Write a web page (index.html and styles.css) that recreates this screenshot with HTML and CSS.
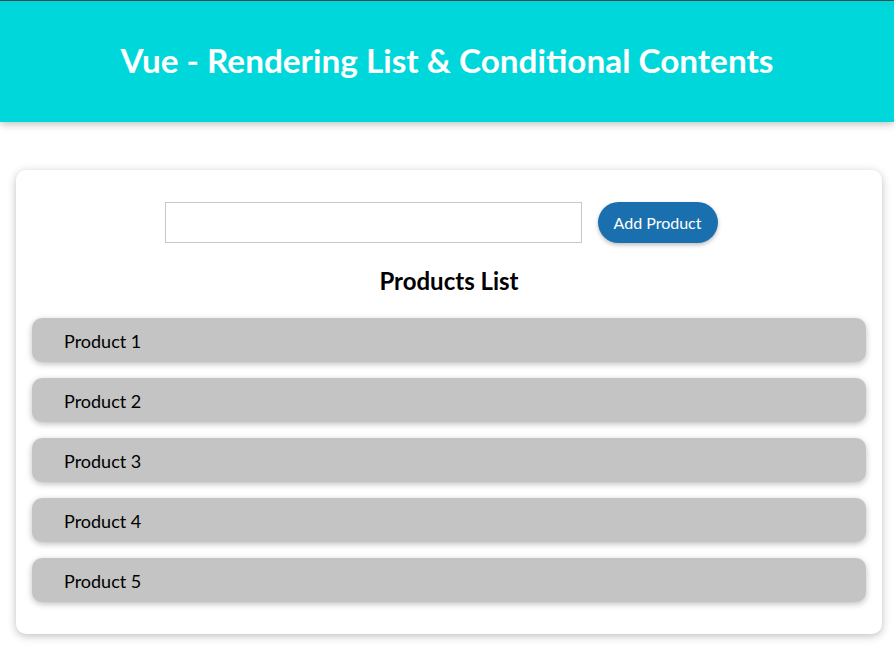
FILE: index.html
```html
<!DOCTYPE html>
<html lang="en">
<head>
<meta charset="utf-8">
<title>Vue - Rendering List &amp; Conditional Contents</title>
<link rel="stylesheet" href="styles.css">
</head>
<body>
<header class="site-header">
  <h1 class="site-title">Vue - Rendering List &amp; Conditional Contents</h1>
</header>
<main>
  <section class="card">
    <div class="add-row">
      <input class="add-input" type="text">
      <button class="add-button" type="button">Add Product</button>
    </div>
    <h2 class="list-title">Products List</h2>
    <ul class="product-list">
      <li class="product">Product 1</li>
      <li class="product">Product 2</li>
      <li class="product">Product 3</li>
      <li class="product">Product 4</li>
      <li class="product">Product 5</li>
    </ul>
  </section>
</main>
</body>
</html>
```
FILE: styles.css
```css
* { box-sizing: border-box; }
html { font-family: "Lato", "Noto Sans", sans-serif; }
body { margin: 0; background: #fff; color: #000; }

.site-header {
  height: 122px;
  border-top: 1px solid #3d4a4e;
  background: #00d7da;
  box-shadow: 0 2px 8px rgba(0, 0, 0, 0.26);
  display: flex;
  align-items: center;
  justify-content: center;
  padding-bottom: 3px;
}
.site-title {
  margin: 0;
  color: #fff;
  font-size: 33.3px;
  font-weight: 700;
}

.card {
  margin: 48px 12px 24px 16px;
  padding: 32px 16px 32px;
  background: #fff;
  border-radius: 10px;
  box-shadow: 0 2px 8px rgba(0, 0, 0, 0.26);
}

.add-row {
  display: flex;
  justify-content: center;
  align-items: center;
  gap: 16px;
  padding-right: 16px;
}
.add-input {
  width: 417px;
  height: 41px;
  border: 1px solid #c8c8c8;
  font: inherit;
  padding: 4px 8px;
}
.add-button {
  width: 120px;
  height: 41px;
  border: none;
  border-radius: 21px;
  background: #1a70ae;
  color: #fff;
  font: inherit;
  font-size: 16px;
  box-shadow: 0 2px 4px rgba(0, 0, 0, 0.26);
}

.list-title {
  margin: 23px 0 0;
  text-align: center;
  font-size: 24px;
  font-weight: 700;
  line-height: 30px;
}

.product-list {
  list-style: none;
  margin: 22px 0 0;
  padding: 0;
  display: flex;
  flex-direction: column;
  gap: 16px;
}
.product {
  height: 44px;
  padding: 1px 32px 0;
  display: flex;
  align-items: center;
  background: #c4c4c4;
  border-radius: 10px;
  font-size: 18px;
  box-shadow: 0 2px 6px rgba(0, 0, 0, 0.26);
}
```
